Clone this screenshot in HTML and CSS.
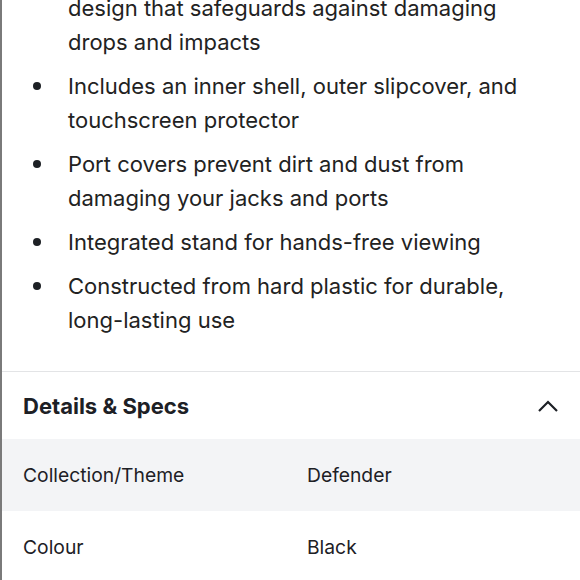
FILE: index.html
```html
<!DOCTYPE html>
<html>
<head>
<meta charset="utf-8">
<link rel="stylesheet" href="styles.css">
</head>
<body>
<div class="page">
  <section class="overview">
    <ul class="features">
      <li class="cont">design that safeguards against damaging drops and impacts</li>
      <li>Includes an inner shell, outer slipcover, and touchscreen protector</li>
      <li>Port covers prevent dirt and dust from damaging your jacks and ports</li>
      <li>Integrated stand for hands-free viewing</li>
      <li>Constructed from hard plastic for durable, long-lasting use</li>
    </ul>
  </section>
  <section class="specs">
    <div class="specs-head">
      <h2>Details &amp; Specs</h2>
      <svg class="chev" width="22" height="14" viewBox="0 0 22 14"><path d="M2 12 L11 3 L20 12" fill="none" stroke="#1d2025" stroke-width="2.2"/></svg>
    </div>
    <div class="row alt"><span class="k">Collection/Theme</span><span class="v">Defender</span></div>
    <div class="row"><span class="k">Colour</span><span class="v">Black</span></div>
  </section>
</div>
</body>
</html>
```
FILE: styles.css
```css
html, body { margin: 0; padding: 0; background: #fff; }
body { font-family: Inter, "Noto Sans", sans-serif; color: #1d2025; }
.page { border-left: 2px solid #7a7a7a; min-height: 580px; overflow: hidden; }
.overview { padding-bottom: 34px; }
.features { list-style: none; margin: -9px 0 0 0; padding: 0 20px 0 66px; font-size: 22px; line-height: 34px; color: #222; }
.features li { position: relative; margin-bottom: 10px; }
.features li:last-child { margin-bottom: 0; }
.features li::before { content: ""; position: absolute; left: -35px; top: 13px; width: 8px; height: 8px; border-radius: 50%; background: #1d2025; }
.features li.cont::before { display: none; }
.specs { border-top: 1px solid #e3e4e6; }
.specs-head { display: flex; align-items: center; justify-content: space-between; height: 67px; padding: 0 21px 0 21px; }
.specs-head h2 { margin: 0; font-size: 22px; font-weight: 700; }
.chev { display: block; }
.row { display: flex; align-items: center; height: 72px; padding-left: 21px; font-size: 19.3px; }
.row.alt { background: #f3f4f6; }
.k { width: 284px; }
```
